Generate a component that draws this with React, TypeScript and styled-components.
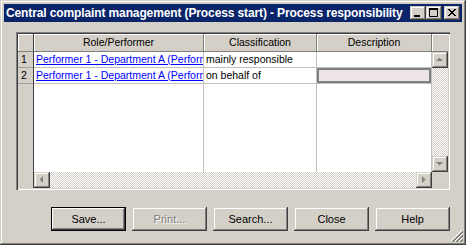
import React from 'react'
import styled, { createGlobalStyle } from 'styled-components'

const face = '#d4d0c8'

const GlobalStyle = createGlobalStyle`
  html, body {
    margin: 0;
    padding: 0;
    background: ${face};
  }
  body {
    font-family: 'Liberation Sans', Arial, sans-serif;
    font-size: 10.5px;
  }
  * {
    box-sizing: border-box;
  }
`

const raised = `inset -1px -1px #404040, inset 1px 1px ${face}, inset -2px -2px #808080, inset 2px 2px #fff`

interface cellProps {
  w?: number
  selected?: boolean
}

const App = () => {
  return (
    <>
      <GlobalStyle />
      <Window>
        <TitleBar>
          <Title>Central complaint management (Process start) - Process responsibility</Title>
          <CaptionButton>
            <svg width="16" height="14" viewBox="0 0 16 14">
              <rect x="4" y="9" width="6" height="2" fill="#000" />
            </svg>
          </CaptionButton>
          <CaptionButton>
            <svg width="16" height="14" viewBox="0 0 16 14">
              <path d="M3.5 2.5H11.5V10.5H3.5Z" fill="none" stroke="#000" />
              <rect x="3" y="2" width="9" height="2" fill="#000" />
            </svg>
          </CaptionButton>
          <CaptionButton close>
            <svg width="16" height="14" viewBox="0 0 16 14">
              <path d="M4 3L11 10M5 3L12 10M11 3L4 10M12 3L5 10" stroke="#000" strokeWidth="1" />
            </svg>
          </CaptionButton>
        </TitleBar>

        <Body>
          <GridFrame>
            <HeaderRow>
              <CornerHead />
              <HeaderCell w={170}>Role/Performer</HeaderCell>
              <HeaderCell w={113}>Classification</HeaderCell>
              <HeaderCell w={115}>Description</HeaderCell>
              <HeaderFiller />
            </HeaderRow>
            <GridBody>
              <RowHeads>
                <RowNum>1</RowNum>
                <RowNum>2</RowNum>
              </RowHeads>
              <Main>
                <Upper>
                  <DataArea>
                    <Cell>
                      <Link>Performer 1 - Department A (Perform</Link>
                    </Cell>
                    <Cell>mainly responsible</Cell>
                    <Cell />
                    <Cell>
                      <Link>Performer 1 - Department A (Perform</Link>
                    </Cell>
                    <Cell>on behalf of</Cell>
                    <Cell selected />
                    <FillCell />
                    <FillCell />
                    <FillCell />
                  </DataArea>
                  <VScroll>
                    <ScrollButton>
                      <svg width="16" height="16" viewBox="0 0 16 16">
                        <path d="M4 9H11L7.5 5.5Z" fill="#808080" />
                      </svg>
                    </ScrollButton>
                    <Track />
                    <ScrollButton>
                      <svg width="16" height="16" viewBox="0 0 16 16">
                        <path d="M4 6H11L7.5 9.5Z" fill="#808080" />
                      </svg>
                    </ScrollButton>
                  </VScroll>
                </Upper>
                <Lower>
                  <ScrollButton>
                    <svg width="16" height="16" viewBox="0 0 16 16">
                      <path d="M9 4V11L5.5 7.5Z" fill="#808080" />
                    </svg>
                  </ScrollButton>
                  <Track />
                  <ScrollButton>
                    <svg width="16" height="16" viewBox="0 0 16 16">
                      <path d="M6 4V11L9.5 7.5Z" fill="#808080" />
                    </svg>
                  </ScrollButton>
                  <ScrollCorner />
                </Lower>
              </Main>
            </GridBody>
          </GridFrame>

          <ButtonRow>
            <Button isDefault>Save...</Button>
            <Button disabled>Print...</Button>
            <Button>Search...</Button>
            <Button>Close</Button>
            <Button>Help</Button>
          </ButtonRow>
        </Body>

        <Grip>
          <svg width="12" height="12" viewBox="0 0 12 12">
            <path d="M11 0L0 11M11 4L4 11M11 8L8 11" stroke="#fff" />
            <path d="M12 1L1 12M12 2L2 12M12 5L5 12M12 6L6 12M12 9L9 12M12 10L10 12" stroke="#808080" />
          </svg>
        </Grip>
      </Window>
    </>
  )
}

const Window = styled.div`
  position: relative;
  width: 466px;
  height: 245px;
  padding: 4px;
  background: ${face};
  box-shadow: inset -1px -1px #404040, inset 1px 1px ${face}, inset -2px -2px #808080, inset 2px 2px #fff;
  display: flex;
  flex-direction: column;
`
const TitleBar = styled.div`
  height: 18px;
  background: #0a246a;
  display: flex;
  align-items: center;
  padding: 0 2px;
`
const Title = styled.div`
  flex: 1;
  color: #fff;
  font: bold 12px 'Liberation Sans', Arial, sans-serif;
  letter-spacing: -0.12px;
  white-space: nowrap;
  overflow: hidden;
  line-height: 18px;
`
const CaptionButton = styled.div<{ close?: boolean }>`
  width: 16px;
  height: 14px;
  flex: none;
  background: ${face};
  box-shadow: ${raised};
  margin-left: ${p => (p.close ? '2px' : '0')};
  svg {
    display: block;
  }
`
const Body = styled.div`
  flex: 1;
  display: flex;
  flex-direction: column;
  padding: 10px 8px 0 12px;
`
const GridFrame = styled.div`
  height: 158px;
  width: 434px;
  padding: 2px;
  display: flex;
  flex-direction: column;
  box-shadow: inset 1px 1px #808080, inset 2px 2px #404040, inset -1px -1px #fff, inset -2px -2px ${face};
`
const HeaderRow = styled.div`
  height: 18px;
  display: flex;
`
const CornerHead = styled.div`
  width: 16px;
  background: ${face};
  border-right: 1px solid #404040;
  border-bottom: 1px solid #808080;
  box-shadow: inset 1px 1px #fff;
`
const HeaderCell = styled.div<cellProps>`
  width: ${p => p.w}px;
  background: ${face};
  border-right: 1px solid #808080;
  border-bottom: 1px solid #808080;
  box-shadow: inset 1px 1px #fff;
  text-align: center;
  line-height: 17px;
  color: #000;
  white-space: nowrap;
  overflow: hidden;
`
const HeaderFiller = styled.div`
  flex: 1;
  background: ${face};
  border-bottom: 1px solid #808080;
  box-shadow: inset 1px 1px #fff;
`
const GridBody = styled.div`
  flex: 1;
  display: flex;
`
const RowHeads = styled.div`
  width: 16px;
  background: ${face};
  border-right: 1px solid #404040;
`
const RowNum = styled.div`
  height: 16px;
  line-height: 15px;
  padding-left: 3px;
  border-bottom: 1px solid #a0a0a0;
  color: #000;
`
const Main = styled.div`
  flex: 1;
  display: flex;
  flex-direction: column;
`
const Upper = styled.div`
  flex: 1;
  display: flex;
`
const DataArea = styled.div`
  width: 398px;
  background: #fff;
  display: grid;
  grid-template-columns: 170px 113px 115px;
  grid-template-rows: 16px 16px 1fr;
`
const Cell = styled.div<cellProps>`
  border-right: 1px solid #c0c0c0;
  border-bottom: 1px solid #c0c0c0;
  padding: 0 2px;
  line-height: 15px;
  white-space: nowrap;
  overflow: hidden;
  text-overflow: clip;
  color: #000;
  background: ${p => (p.selected ? '#eee6e6' : '#fff')};
  box-shadow: ${p => (p.selected ? 'inset 0 0 0 2px #808080' : 'none')};
`
const FillCell = styled.div`
  border-right: 1px solid #c0c0c0;
`
const Link = styled.span`
  color: #0000ff;
  text-decoration: underline;
`
const VScroll = styled.div`
  width: 16px;
  display: flex;
  flex-direction: column;
`
const Track = styled.div`
  flex: 1;
  background-color: #fff;
  background-image: repeating-conic-gradient(${face} 0 25%, #fff 0 50%);
  background-size: 2px 2px;
`
const ScrollButton = styled.div`
  width: 16px;
  height: 16px;
  flex: none;
  background: ${face};
  box-shadow: ${raised};
  svg {
    display: block;
  }
`
const Lower = styled.div`
  height: 16px;
  display: flex;
`
const ScrollCorner = styled.div`
  width: 16px;
  background: ${face};
`
const ButtonRow = styled.div`
  display: flex;
  justify-content: flex-end;
  gap: 6px;
  margin-top: 17px;
  width: 434px;
`
const Button = styled.button<{ isDefault?: boolean }>`
  width: 75px;
  height: 24px;
  padding: 0;
  border: none;
  background: ${face};
  font: 11px 'Liberation Sans', Arial, sans-serif;
  color: #000;
  box-shadow: ${p =>
    p.isDefault
      ? `inset 0 0 0 1px #000, inset -2px -2px #404040, inset 2px 2px #fff, inset -3px -3px #808080`
      : raised};
  &:disabled {
    color: #808080;
    text-shadow: 1px 1px #fff;
  }
`
const Grip = styled.div`
  position: absolute;
  right: 3px;
  bottom: 3px;
  width: 12px;
  height: 12px;
  svg {
    display: block;
  }
`

export default App
